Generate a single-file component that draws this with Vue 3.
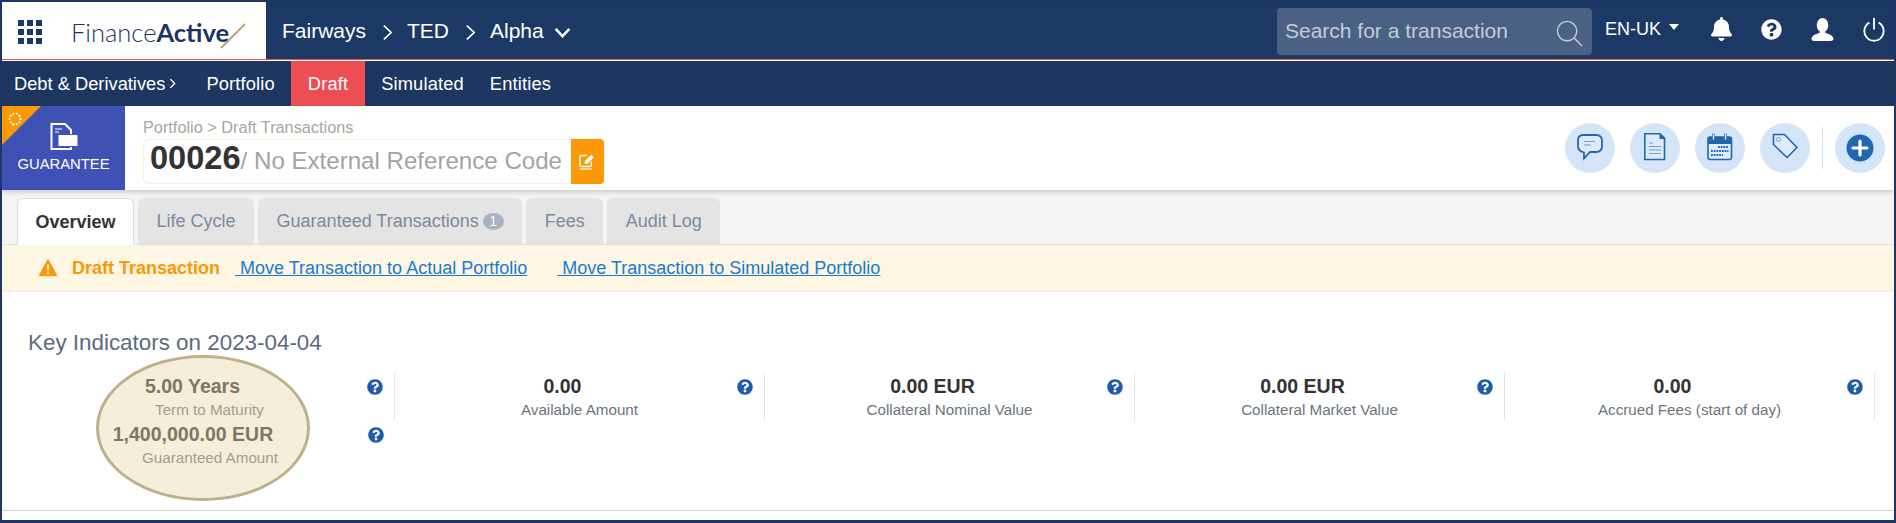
<script setup>
const mainTabs = [
  { label: 'Overview', active: true },
  { label: 'Life Cycle' },
  { label: 'Guaranteed Transactions', badge: 1 },
  { label: 'Fees' },
  { label: 'Audit Log' },
]
const subNav = [
  { label: 'Portfolio' },
  { label: 'Draft', active: true },
  { label: 'Simulated' },
  { label: 'Entities' },
]
const kpiColumns = [
  [
    { value: '5.00 Years', label: 'Term to Maturity' },
    { value: '1,400,000.00 EUR', label: 'Guaranteed Amount' },
  ],
  [{ value: '0.00', label: 'Available Amount' }],
  [{ value: '0.00 EUR', label: 'Collateral Nominal Value' }],
  [{ value: '0.00 EUR', label: 'Collateral Market Value' }],
  [{ value: '0.00', label: 'Accrued Fees (start of day)' }],
]
const helpPath = 'M504 256c0 136.997-111.043 248-248 248S8 392.997 8 256C8 119.083 119.043 8 256 8s248 111.083 248 248zM262.655 90c-54.497 0-89.255 22.957-116.549 63.758-3.536 5.286-2.353 12.415 2.715 16.258l34.699 26.31c5.205 3.947 12.621 3.008 16.665-2.122 17.864-22.658 30.113-35.797 57.303-35.797 20.429 0 45.698 13.148 45.698 32.958 0 14.976-12.363 22.667-32.534 33.976C247.128 238.528 216 254.941 216 296v4c0 6.627 5.373 12 12 12h56c6.627 0 12-5.373 12-12v-1.333c0-28.462 83.186-29.647 83.186-106.667 0-58.002-60.165-102-116.531-102zM256 338c-25.365 0-46 20.635-46 46 0 25.364 20.635 46 46 46s46-20.636 46-46c0-25.365-20.635-46-46-46z'
const dots = Array.from({ length: 10 }, (_, i) => {
  const a = (i / 10) * Math.PI * 2
  return { cx: 13 + Math.cos(a) * 5.5, cy: 13 + Math.sin(a) * 5.5, r: i % 3 === 0 ? 1.3 : 1 }
})
</script>

<template>
  <div class="frame">
    <header class="topbar">
      <div class="brand">
        <svg class="apps" viewBox="0 0 24 24" width="24" height="24">
          <g fill="#1e3763">
            <rect x="0" y="0" width="6" height="6" /><rect x="9" y="0" width="6" height="6" /><rect x="18" y="0" width="6" height="6" />
            <rect x="0" y="9" width="6" height="6" /><rect x="9" y="9" width="6" height="6" /><rect x="18" y="9" width="6" height="6" />
            <rect x="0" y="18" width="6" height="6" /><rect x="9" y="18" width="6" height="6" /><rect x="18" y="18" width="6" height="6" />
          </g>
        </svg>
        <div class="logo">
          <span class="logo-light">Finance</span><span class="logo-bold">Active</span>
          <svg class="logo-slash" viewBox="0 0 26 26" width="26" height="26">
            <path d="M1 25 L25 1" stroke="#b3a27c" stroke-width="1.8" fill="none" />
          </svg>
        </div>
      </div>
      <nav class="crumbs">
        <span>Fairways</span>
        <svg class="chev" viewBox="0 0 12 18" width="11" height="17"><path d="M2 1.5 L10 9 L2 16.5" fill="none" stroke="#fff" stroke-width="1.8" /></svg>
        <span>TED</span>
        <svg class="chev" viewBox="0 0 12 18" width="11" height="17"><path d="M2 1.5 L10 9 L2 16.5" fill="none" stroke="#fff" stroke-width="1.8" /></svg>
        <span>Alpha</span>
        <svg class="chev-down" viewBox="0 0 18 12" width="17" height="11"><path d="M1.5 2 L9 10 L16.5 2" fill="none" stroke="#fff" stroke-width="2.6" /></svg>
      </nav>
      <div class="search">
        <span class="search-text">Search for a transaction</span>
        <svg viewBox="0 0 28 28" width="27" height="27">
          <circle cx="11.5" cy="11.5" r="10" fill="none" stroke="#c9ced6" stroke-width="1.4" />
          <path d="M18.5 18.5 L27 27" stroke="#c9ced6" stroke-width="1.4" />
        </svg>
      </div>
      <div class="lang">EN-UK<span class="caret"></span></div>
      <div class="top-icons">
        <svg viewBox="0 0 448 512" width="21" height="24"><path fill="#fff" d="M224 512c35.32 0 63.97-28.65 63.97-64H160.03c0 35.35 28.65 64 63.97 64zm215.39-149.71c-19.32-20.76-55.47-51.99-55.47-154.29 0-77.7-54.48-139.9-127.94-155.16V32c0-17.67-14.32-32-31.98-32s-31.98 14.33-31.98 32v20.84C118.56 68.1 64.08 130.3 64.08 208c0 102.3-36.15 133.53-55.47 154.29-6 6.45-8.66 14.16-8.61 21.71.11 16.4 12.98 32 32.1 32h383.8c19.12 0 32-15.6 32.1-32 .05-7.55-2.61-15.27-8.61-21.71z" /></svg>
        <svg viewBox="0 0 512 512" width="21" height="21"><path fill="#fff" :d="helpPath" /></svg>
        <svg viewBox="0 0 24 24" width="23" height="23">
          <ellipse cx="12" cy="7.5" rx="6" ry="7.5" fill="#fff" />
          <path d="M9.500 13 L14.500 13 L15 15.500 C18 17 23 17.500 23.500 22 C23.600 23.200 22 24 20 24 H4 C2 24 .4 23.200 .5 22 C1 17.500 6 17 9 15.500 Z" fill="#fff" />
        </svg>
        <svg viewBox="0 0 24 26" width="22" height="25"><path d="M7 5.500 A10.500 10.500 0 1 0 17 5.500" fill="none" stroke="#fff" stroke-width="2" /><path d="M12 0.500 V13" stroke="#fff" stroke-width="2" /></svg>
      </div>
    </header>
    <div class="white-rule"></div>
    <nav class="subnav">
      <span class="subnav-root">Debt &amp; Derivatives
        <svg viewBox="0 0 8 12" width="7" height="11"><path d="M1.500 1 L6.500 6 L1.500 11" fill="none" stroke="#fff" stroke-width="1.600" /></svg>
      </span>
      <span v-for="item in subNav" :key="item.label" class="subnav-item" :class="{ active: item.active }">{{ item.label }}</span>
    </nav>
    <section class="head">
      <div class="type-box">
        <svg class="corner" viewBox="0 0 39 39" width="39" height="39">
          <path d="M0 0 H39 L0 39 Z" fill="#fb9805" />
          <circle v-for="(d, i) in dots" :key="i" :cx="d.cx" :cy="d.cy" :r="d.r" fill="#fff" />
        </svg>
        <svg class="type-icon" viewBox="0 0 28 27" width="28" height="27">
          <path d="M1.500 1 H15 L21 7 V26 H1.500 Z" fill="none" stroke="#fff" stroke-width="2" />
          <path d="M5 6 H12 M5 9 H9" stroke="#fff" stroke-width="1" />
          <rect x="8" y="11.500" width="20" height="12" fill="#fff" stroke="#3f51b5" stroke-width="1" />
        </svg>
        <span class="type-label">GUARANTEE</span>
      </div>
      <div class="title-block">
        <div class="breadcrumb">Portfolio &gt; Draft Transactions</div>
        <div class="ref-row">
          <div class="ref-box"><strong>00026</strong><span>/ No External Reference Code</span></div>
          <div class="edit-btn">
            <svg viewBox="0 0 20 20" width="17" height="17">
              <path d="M9 3 H2.500 A1.500 1.500 0 0 0 1 4.500 V14.500 A1.500 1.500 0 0 0 2.500 16 H13 A1.500 1.500 0 0 0 14.500 14.500 V10" fill="none" stroke="#fff" stroke-width="1.800" />
              <path d="M7 9.500 L14.500 2 L17.500 5 L10 12.500 L6.500 13 Z" fill="#fff" />
              <path d="M1 18.800 H15" stroke="#fff" stroke-width="1.400" />
            </svg>
          </div>
        </div>
      </div>
      <div class="actions">
        <button class="action">
          <svg viewBox="0 0 50 50" width="50" height="50">
            <path d="M18 12 H31 Q37 12 37 18 V23 Q37 29 31 29 H25 L19 35.500 V29.500 Q13 28 13 23 V18 Q13 12 18 12 Z" fill="#dfeafa" stroke="#2166b0" stroke-width="1.800" />
            <path d="M19 18.500 H30 M19 22 H26" stroke="#6c9bd0" stroke-width="1.100" />
          </svg>
        </button>
        <button class="action">
          <svg viewBox="0 0 50 50" width="50" height="50">
            <path d="M14.800 10.800 H30 L34.500 15 V36.500 H14.800 Z" fill="#dfeafa" stroke="#2166b0" stroke-width="1.600" />
            <path d="M29.500 10.500 L35 16 H29.500 Z" fill="#2166b0" />
            <path d="M19 20 H23 M19 23.500 H31 M19 27 H31 M19 30.500 H31" stroke="#6c9bd0" stroke-width="1.100" />
          </svg>
        </button>
        <button class="action">
          <svg viewBox="0 0 50 50" width="50" height="50">
            <rect x="13" y="14" width="23.500" height="22.500" rx="2" fill="#dfeafa" stroke="#2166b0" stroke-width="1.600" />
            <path d="M13 14 H36.500 V21 H13 Z" fill="#2166b0" />
            <rect x="17.500" y="11" width="2" height="6" fill="#dfeafa" stroke="#2166b0" stroke-width=".6" />
            <rect x="29.500" y="11" width="2" height="6" fill="#dfeafa" stroke="#2166b0" stroke-width=".6" />
            <path d="M23 24 H33.500 M16 28 H33.500 M16 32 H28" stroke="#2166b0" stroke-width="1.800" stroke-dasharray="1.800 .9" />
          </svg>
        </button>
        <button class="action">
          <svg viewBox="0 0 50 50" width="50" height="50">
            <path d="M13.500 11.500 H24.500 L37 24.500 L27 34.500 L13.500 21.500 Z" fill="#dfeafa" stroke="#2166b0" stroke-width="1.600" stroke-linejoin="round" />
            <circle cx="18.500" cy="16.500" r="2" fill="none" stroke="#6c9bd0" stroke-width="1" />
          </svg>
        </button>
        <span class="action-sep"></span>
        <button class="action">
          <svg viewBox="0 0 50 50" width="50" height="50">
            <circle cx="25" cy="25" r="13.500" fill="#2166b0" />
            <path d="M25 18 V32 M18 25 H32" stroke="#fff" stroke-width="3.200" stroke-linecap="round" />
          </svg>
        </button>
      </div>
    </section>
    <div class="tabs">
      <div v-for="tab in mainTabs" :key="tab.label" class="tab" :class="{ active: tab.active }">
        {{ tab.label }}<span v-if="tab.badge" class="badge">{{ tab.badge }}</span>
      </div>
    </div>
    <div class="banner">
      <svg viewBox="0 0 20 20" width="18" height="18">
        <path d="M10 1 L19.500 18.500 H.5 Z" fill="#fb9805" stroke="#fb9805" stroke-width="1.500" stroke-linejoin="round" />
        <path d="M10 6.500 V12.500" stroke="#fdf6e3" stroke-width="2.200" />
        <circle cx="10" cy="15.200" r="1.300" fill="#fdf6e3" />
      </svg>
      <strong class="draft">Draft Transaction</strong>
      <a class="link first">&nbsp;Move Transaction to Actual Portfolio</a>
      <a class="link">&nbsp;Move Transaction to Simulated Portfolio</a>
    </div>
    <section class="indicators">
      <h2>Key Indicators on 2023-04-04</h2>
      <div class="kpis">
        <div v-for="(col, c) in kpiColumns" :key="c" class="kpi-col">
          <div v-for="kpi in col" :key="kpi.label" class="kpi">
            <div class="kpi-value">{{ kpi.value }}</div>
            <div class="kpi-help">
              <svg viewBox="0 0 512 512" width="16" height="16"><path fill="#1f5ca8" :d="helpPath" /></svg>
            </div>
            <div class="kpi-label">{{ kpi.label }}</div>
          </div>
        </div>
      </div>
      <div class="highlight"></div>
    </section>
  </div>
</template>

<style>
html, body { margin: 0; padding: 0; background: #fff; }
</style>

<style scoped>
.frame {
  width: 1896px;
  height: 523px;
  box-sizing: border-box;
  border: 2px solid #1c3766;
  border-bottom-width: 3px;
  overflow: hidden;
  background: #fff;
  font-family: "Liberation Sans", Arial, sans-serif;
  display: flex;
  flex-direction: column;
}
.topbar {
  height: 58px;
  box-sizing: border-box;
  flex: none;
  background: #1c3966;
  border-bottom: 1px solid #e4585d;
  display: flex;
  align-items: center;
  color: #fff;
}
.white-rule { height: 1px; background: #fff; flex: none; }
.brand {
  width: 264px;
  height: 57px;
  background: #fff;
  display: flex;
  align-items: center;
  flex: none;
}
.apps { margin-left: 16px; margin-top: 3px; flex: none; }
.logo {
  margin-left: 29px;
  display: flex;
  align-items: center;
  flex: none;
  color: #1c3560;
  font-family: Lato, "Liberation Sans", sans-serif;
  font-size: 25.500px;
  margin-top: 3px;
}
.logo-light { font-weight: 300; }
.logo-bold { font-weight: 700; }
.logo-slash { margin-left: -9px; margin-top: 7px; }
.crumbs {
  display: flex;
  align-items: center;
  margin-left: 16px;
  font-size: 21px;
  flex: none;
  padding-top: 1px;
}
.chev { margin: 2px 14px 0 16px; }
.chev-down { margin: 3px 0 0 10px; }
.search {
  margin-left: auto;
  width: 315px;
  height: 47px;
  margin-top: 1px;
  background: #4a6184;
  border-radius: 4px;
  display: flex;
  align-items: center;
  justify-content: space-between;
  box-sizing: border-box;
  padding: 0 9px 0 8px;
  flex: none;
}
.search-text { font-size: 21px; color: #c6cbd3; }
.search svg { margin-top: 5px; }
.lang {
  margin-left: 13px;
  font-size: 18px;
  display: flex;
  align-items: center;
  margin-top: -3px;
  flex: none;
}
.caret {
  width: 0;
  height: 0;
  border-left: 5.500px solid transparent;
  border-right: 5.500px solid transparent;
  border-top: 6px solid #fff;
  margin: -4px 0 0 8px;
}
.top-icons {
  display: flex;
  align-items: center;
  gap: 29px;
  margin-left: 32px;
  margin-right: 9px;
  margin-top: -3px;
  flex: none;
}
.subnav {
  height: 45px;
  flex: none;
  background: #1e3760;
  color: #fff;
  display: flex;
  align-items: stretch;
  font-size: 18.300px;
}
.subnav-root {
  display: flex;
  align-items: center;
  gap: 4px;
  padding: 0 14px 0 12px;
}
.subnav-item {
  display: flex;
  align-items: center;
  padding: 0 16px;
  letter-spacing: .15px;
}
.subnav-item.active { background: #ec4e53; padding: 0 17px; }
.subnav-item:last-child { margin-left: -6px; }
.head {
  height: 84px;
  flex: none;
  background: #fff;
  display: flex;
  box-shadow: 0 2px 5px rgba(0, 0, 0, .18);
  position: relative;
  z-index: 1;
}
.type-box {
  width: 123px;
  flex: none;
  background: #3f51b5;
  position: relative;
  display: flex;
  flex-direction: column;
  align-items: center;
  color: #fff;
  padding-top: 17px;
  box-sizing: border-box;
}
.corner { position: absolute; left: 0; top: 0; }
.type-label { font-size: 14.800px; margin-top: 6px; }
.title-block {
  margin-left: 18px;
  padding-top: 12px;
}
.breadcrumb {
  font-size: 16.300px;
  color: #a6a6a6;
  line-height: 19px;
}
.ref-row {
  display: flex;
  margin-top: 2px;
}
.ref-box {
  width: 428px;
  height: 45px;
  box-sizing: border-box;
  border: 1px solid #fbeed3;
  border-right: none;
  border-radius: 6px 0 0 6px;
  display: flex;
  align-items: baseline;
  padding-left: 6px;
  line-height: 36px;
  white-space: nowrap;
}
.ref-box strong {
  font-size: 32.600px;
  color: #333;
}
.ref-box span {
  font-size: 24.100px;
  color: #a3a3a3;
}
.edit-btn {
  width: 33px;
  height: 45px;
  background: #fb9805;
  border-radius: 0 4px 4px 0;
  display: flex;
  align-items: center;
  justify-content: center;
}
.actions {
  margin-left: auto;
  display: flex;
  align-items: center;
  gap: 15px;
  padding-right: 9px;
  height: 84px;
}
.action {
  width: 50px;
  height: 50px;
  border: none;
  padding: 0;
  border-radius: 50%;
  background: #d5e5f8;
  display: block;
}
.action svg { display: block; }
.action-sep {
  width: 1px;
  height: 42px;
  background: #cfe0f2;
  margin: 0 -3px;
}
.tabs {
  height: 55px;
  flex: none;
  box-sizing: border-box;
  background: #f4f4f4;
  padding: 8px 0 0 15px;
  display: flex;
  gap: 4px;
  border-bottom: 1px solid #e6e2d6;
}
.tab {
  height: 46px;
  box-sizing: border-box;
  padding: 0 18.500px;
  background: #e4e4e4;
  border-radius: 6px 6px 0 0;
  color: #7b8a9e;
  font-size: 18px;
  display: flex;
  align-items: center;
  white-space: nowrap;
}
.tab.active {
  background: #fff;
  color: #333;
  font-weight: 700;
  border: 1px solid #dedede;
  border-bottom: none;
  height: 47px;
  padding: 0 17.500px;
}
.badge {
  width: 21px;
  height: 17px;
  border-radius: 50%;
  background: #a9b2c2;
  color: #fff;
  font-size: 14px;
  margin-left: 4px;
  display: flex;
  align-items: center;
  justify-content: center;
}
.banner {
  height: 47px;
  flex: none;
  box-sizing: border-box;
  background: #fdf6e3;
  border-bottom: 1px solid #f5eeda;
  display: flex;
  align-items: center;
  padding-left: 37px;
  font-size: 18px;
}
.draft { color: #fb9805; margin-left: 15px; }
.link {
  color: #1a7bd0;
  text-decoration: underline;
  margin-left: 30px;
}
.link.first { margin-left: 15px; }
.indicators {
  flex: 1;
  position: relative;
  border-bottom: 1px solid #cfcfcf;
  margin-bottom: 9px;
  padding-top: 38px;
}
h2 {
  margin: 0 0 0 26px;
  font-size: 22.400px;
  font-weight: 400;
  line-height: 26px;
  color: #5b6b80;
}
.kpis {
  display: grid;
  grid-template-columns: repeat(5, 370px);
  margin: 17px 0 0 23px;
}
.kpi-col { display: flex; flex-direction: column; }
.kpi {
  height: 48px;
  box-sizing: border-box;
  display: grid;
  grid-template-columns: 1fr 34px;
  grid-template-rows: 26px 22px;
  border-right: 1px solid #e2e3e5;
}
.kpi-col:first-child .kpi:nth-child(2) { border-right: none; }
.kpi-value {
  font-size: 19.500px;
  font-weight: 700;
  color: #333;
  text-align: center;
  line-height: 26px;
}
.kpi-help {
  padding-left: 7px;
  height: 18px;
  margin-top: 6px;
}
.kpi-help svg { display: block; background: #f8f9fa; }
.kpi-label {
  grid-column: 1 / 3;
  text-align: center;
  font-size: 15.200px;
  color: #6c757d;
  line-height: 22px;
}
.highlight {
  position: absolute;
  left: 94px;
  top: 63px;
  width: 214px;
  height: 146px;
  box-sizing: border-box;
  border-radius: 50%;
  background: rgba(231, 214, 167, .42);
  border: 3px solid #bfb08c;
}
</style>
